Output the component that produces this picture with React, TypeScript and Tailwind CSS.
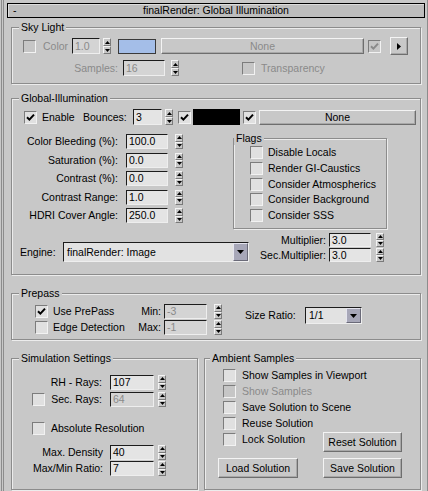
import type { ReactNode } from "react";

const GRAY = "text-[#8a8a8a]";

function Check({ checked = false, disabled = false, className = "" }: { checked?: boolean; disabled?: boolean; className?: string }) {
  return (
    <span
      className={`flex w-[13px] h-[13px] shrink-0 items-center justify-center border border-t-[#7c7c7c] border-l-[#7c7c7c] border-b-[#f2f2f2] border-r-[#f2f2f2] ${
        disabled ? "bg-[#c6c6c6]" : "bg-[#e0e0e0]"
      } ${className}`}
    >
      {checked && (
        <svg width="9" height="9" viewBox="0 0 9 9">
          <path d="M1 4.2 L3.4 6.6 L8 1.6" stroke={disabled ? "#8a8a8a" : "#000"} strokeWidth="2" fill="none" />
        </svg>
      )}
    </span>
  );
}

function Spin({ className = "", h = "h-[15px]" }: { className?: string; h?: string }) {
  const half =
    "flex flex-1 items-center justify-center border border-t-[#f4f4f4] border-l-[#f4f4f4] border-b-[#7a7a7a] border-r-[#7a7a7a] bg-[#c8c8c8]";
  return (
    <span className={`flex flex-col w-[8px] ${h} shrink-0 ${className}`}>
      <span className={half}>
        <svg width="5" height="3" viewBox="0 0 5 3">
          <path d="M0 3 L2.5 0 L5 3Z" fill="#000" />
        </svg>
      </span>
      <span className={half}>
        <svg width="5" height="3" viewBox="0 0 5 3">
          <path d="M0 0 L2.5 3 L5 0Z" fill="#000" />
        </svg>
      </span>
    </span>
  );
}

function Field({ value, className = "", disabled = false }: { value: string; className?: string; disabled?: boolean }) {
  return (
    <span
      className={`flex shrink-0 items-center pl-[2px] leading-none border border-t-[#1c1c1c] border-l-[#1c1c1c] border-b-[#eeeeee] border-r-[#eeeeee] ${
        disabled ? "bg-[#d4d4d4] text-[#8a8a8a]" : "bg-[#e4e4e4] text-black"
      } ${className}`}
    >
      {value}
    </span>
  );
}

function Btn({ children, className = "", disabled = false }: { children: ReactNode; className?: string; disabled?: boolean }) {
  return (
    <span
      className={`flex shrink-0 items-center justify-center border border-t-[#f4f4f4] border-l-[#f4f4f4] border-b-[#6e6e6e] border-r-[#6e6e6e] bg-[#c8c8c8] shadow-[inset_-1px_-1px_0_#a8a8a8] ${
        disabled ? GRAY : "text-black"
      } ${className}`}
    >
      {children}
    </span>
  );
}

function Drop({ value, className = "" }: { value: string; className?: string }) {
  return (
    <span
      className={`flex shrink-0 items-stretch border border-t-[#1c1c1c] border-l-[#1c1c1c] border-b-[#eeeeee] border-r-[#eeeeee] bg-[#e2e2e2] ${className}`}
    >
      <span className="flex flex-1 items-center pl-[3px]">{value}</span>
      <span className="flex w-[15px] items-center justify-center border border-t-[#e4e4ee] border-l-[#e4e4ee] border-b-[#6a6a78] border-r-[#6a6a78] bg-[#a7a7b8]">
        <svg width="7" height="4" viewBox="0 0 7 4">
          <path d="M0 0 L3.5 4 L7 0Z" fill="#000" />
        </svg>
      </span>
    </span>
  );
}

function Group({ title, className = "", labelPos = "left-[7px]", children }: { title: string; className?: string; labelPos?: string; children: ReactNode }) {
  return (
    <div className={`relative shrink-0 border border-[#8c8c8c] shadow-[inset_1px_1px_0_#ececec,1px_1px_0_#ececec] ${className}`}>
      <span className={`absolute -top-[7px] ${labelPos} bg-[#c8c8c8] px-[2px] leading-[13px]`}>{title}</span>
      {children}
    </div>
  );
}

function GIField({ label, value }: { label: string; value: string }) {
  return (
    <div className="flex h-[15px] items-center">
      <span className="w-[106px] text-right">{label}</span>
      <Field value={value} className="ml-[8px] w-[42px] h-[15px]" />
      <Spin className="ml-[7px]" />
    </div>
  );
}

function Flag({ label }: { label: string }) {
  return (
    <div className="flex h-[13px] items-center pl-[16px]">
      <Check />
      <span className="ml-[5px]">{label}</span>
    </div>
  );
}

function AmbRow({ label, disabled = false }: { label: string; disabled?: boolean }) {
  return (
    <div className="flex h-[13px] items-center pl-[18px]">
      <Check disabled={disabled} />
      <span className={`ml-[6px] ${disabled ? GRAY : ""}`}>{label}</span>
    </div>
  );
}

export default function App() {
  return (
    <div className="w-[428px] h-[491px] overflow-hidden bg-[#c8c8c8] pl-[1px] flex font-['Liberation_Sans',Arial,sans-serif] text-[10.5px] leading-[13px] text-black">
      <div className="flex flex-1 border-l border-[#8c8c8c] pl-[1px]">
        <div className="flex flex-1 flex-col border-l border-r border-[#8c8c8c]">
          {/* title bar */}
          <div className="mt-[3px] ml-[3px] w-[418px] h-[15px] shrink-0 grid grid-cols-[20px_1fr_20px] items-center border border-black bg-[#bdbdbd] shadow-[inset_1px_1px_0_#dcdcdc]">
            <span className="pl-[5px]">-</span>
            <span className="text-center">finalRender: Global Illumination</span>
            <span />
          </div>

          {/* Sky Light */}
          <Group title="Sky Light" className="ml-[7px] mt-[9px] w-[410px] h-[57px]">
            <div className="mt-[9px] flex h-[18px] items-center">
              <Check disabled className="ml-[11px]" />
              <span className={`ml-[7px] w-[29px] ${GRAY}`}>Color</span>
              <Field value="1.0" disabled className="w-[28px] h-[16px]" />
              <Spin className="ml-[3px]" h="h-[16px]" />
              <span className="ml-[7px] w-[38px] h-[15px] shrink-0 border border-[#3a3a3a] bg-[#a4bee8]" />
              <Btn disabled className="ml-[5px] w-[203px] h-[16px]">None</Btn>
              <Check checked disabled className="ml-[4px]" />
              <Btn className="ml-[9px] w-[18px] h-[18px]">
                <svg width="4" height="7" viewBox="0 0 4 7">
                  <path d="M0 0 L4 3.5 L0 7Z" fill="#000" />
                </svg>
              </Btn>
            </div>
            <div className="mt-[5px] flex h-[16px] items-center">
              <span className={`w-[106px] text-right ${GRAY}`}>Samples:</span>
              <Field value="16" disabled className="ml-[5px] w-[42px] h-[16px]" />
              <Spin className="ml-[6px]" h="h-[16px]" />
              <Check disabled className="ml-[63px]" />
              <span className={`ml-[6px] ${GRAY}`}>Transparency</span>
            </div>
          </Group>

          {/* Global-Illumination */}
          <Group title="Global-Illumination" className="ml-[7px] mt-[14px] w-[410px] h-[177px]">
            <div className="mt-[10px] flex h-[16px] items-center">
              <Check checked className="ml-[12px]" />
              <span className="ml-[5px] w-[41px]">Enable</span>
              <span className="w-[50px]">Bounces:</span>
              <Field value="3" className="w-[29px] h-[16px]" />
              <Spin className="ml-[3px]" h="h-[16px]" />
              <Check checked className="ml-[5px]" />
              <span className="ml-[2px] w-[47px] h-[16px] shrink-0 bg-black" />
              <Check checked className="ml-[3px]" />
              <Btn className="ml-[3px] w-[157px] h-[15px]">None</Btn>
            </div>

            <div className="mt-[9px] flex">
              <div className="flex w-[171px] flex-col gap-[3.5px]">
                <GIField label="Color Bleeding (%):" value="100.0" />
                <GIField label="Saturation (%):" value="0.0" />
                <GIField label="Contrast (%):" value="0.0" />
                <GIField label="Contrast Range:" value="1.0" />
                <GIField label="HDRI Cover Angle:" value="250.0" />
              </div>
              <Group title="Flags" labelPos="left-0" className="ml-[50px] mt-[4px] w-[154px] h-[91px]">
                <div className="flex flex-col gap-[2.75px] pt-[7px]">
                  <Flag label="Disable Locals" />
                  <Flag label="Render GI-Caustics" />
                  <Flag label="Consider Atmospherics" />
                  <Flag label="Consider Background" />
                  <Flag label="Consider SSS" />
                </div>
              </Group>
            </div>

            <div className="mt-[4px] flex items-end">
              <span className="ml-[8px] flex w-[43px] h-[20px] items-center">Engine:</span>
              <Drop value="finalRender: Image" className="w-[186px] h-[20px]" />
              <div className="flex flex-col gap-[1px]">
                <div className="flex h-[14px] items-center">
                  <span className="w-[77px] text-right">Multiplier:</span>
                  <Field value="3.0" className="ml-[3px] w-[42px] h-[14px]" />
                  <Spin className="ml-[5px]" h="h-[14px]" />
                </div>
                <div className="flex h-[14px] items-center">
                  <span className="w-[77px] text-right">Sec.Multiplier:</span>
                  <Field value="3.0" className="ml-[3px] w-[42px] h-[14px]" />
                  <Spin className="ml-[5px]" h="h-[14px]" />
                </div>
              </div>
            </div>
          </Group>

          {/* Prepass */}
          <Group title="Prepass" className="ml-[7px] mt-[18px] w-[410px] h-[47px]">
            <div className="flex pt-[10px]">
              <div className="flex flex-col gap-[1px]">
                <div className="flex h-[15px] items-center">
                  <Check checked className="ml-[23px]" />
                  <span className="ml-[5px] w-[80px]">Use PrePass</span>
                  <span className="w-[28px] text-right">Min:</span>
                  <Field value="-3" disabled className="ml-[3px] w-[43px] h-[15px]" />
                  <Spin className="ml-[7px]" />
                </div>
                <div className="flex h-[15px] items-center">
                  <Check className="ml-[23px]" />
                  <span className="ml-[5px] w-[80px]">Edge Detection</span>
                  <span className="w-[28px] text-right">Max:</span>
                  <Field value="-1" disabled className="ml-[3px] w-[43px] h-[15px]" />
                  <Spin className="ml-[7px]" />
                </div>
              </div>
              <div className="ml-[23px] mt-[3px] flex h-[17px] items-center">
                <span className="w-[60px]">Size Ratio:</span>
                <Drop value="1/1" className="w-[57px] h-[17px]" />
              </div>
            </div>
          </Group>

          {/* bottom groups */}
          <div className="mt-[18px] flex">
            <Group title="Simulation Settings" className="ml-[7px] w-[187px] h-[132px]">
              <div className="flex flex-col pt-[16px]">
                <div className="flex h-[15px] items-center">
                  <span className="w-[90px] text-right">RH - Rays:</span>
                  <Field value="107" className="ml-[8px] w-[44px] h-[15px]" />
                  <Spin className="ml-[4px]" />
                </div>
                <div className="mt-[2px] flex h-[15px] items-center">
                  <Check className="ml-[20px]" />
                  <span className="w-[57px] text-right">Sec. Rays:</span>
                  <Field value="64" disabled className="ml-[8px] w-[44px] h-[15px]" />
                  <Spin className="ml-[4px]" />
                </div>
                <div className="mt-[14px] flex h-[14px] items-center">
                  <Check className="ml-[20px]" />
                  <span className="ml-[6px]">Absolute Resolution</span>
                </div>
                <div className="mt-[10px] flex h-[15px] items-center">
                  <span className="w-[91px] text-right">Max. Density</span>
                  <Field value="40" className="ml-[7px] w-[44px] h-[15px]" />
                  <Spin className="ml-[4px]" />
                </div>
                <div className="mt-[1px] flex h-[15px] items-center">
                  <span className="w-[91px] text-right">Max/Min Ratio:</span>
                  <Field value="7" className="ml-[7px] w-[44px] h-[15px]" />
                  <Spin className="ml-[4px]" />
                </div>
              </div>
            </Group>

            <Group title="Ambient Samples" labelPos="left-[5px]" className="ml-[6px] w-[217px] h-[132px]">
              <div className="flex flex-col pt-[10px]">
                <div className="flex flex-col gap-[3px]">
                  <AmbRow label="Show Samples in Viewport" />
                  <AmbRow label="Show Samples" disabled />
                  <AmbRow label="Save Solution to Scene" />
                  <AmbRow label="Reuse Solution" />
                </div>
                <div className="mt-[2px] flex h-[20px] items-start pl-[18px]">
                  <Check className="mt-[1px]" />
                  <span className="ml-[6px] mt-[1px] w-[81px]">Lock Solution</span>
                  <Btn className="w-[79px] h-[20px]">Reset Solution</Btn>
                </div>
                <div className="mt-[6px] flex">
                  <Btn className="ml-[13px] w-[80px] h-[20px]">Load Solution</Btn>
                  <Btn className="ml-[25px] w-[79px] h-[20px]">Save Solution</Btn>
                </div>
              </div>
            </Group>
          </div>
        </div>
      </div>
    </div>
  );
}
